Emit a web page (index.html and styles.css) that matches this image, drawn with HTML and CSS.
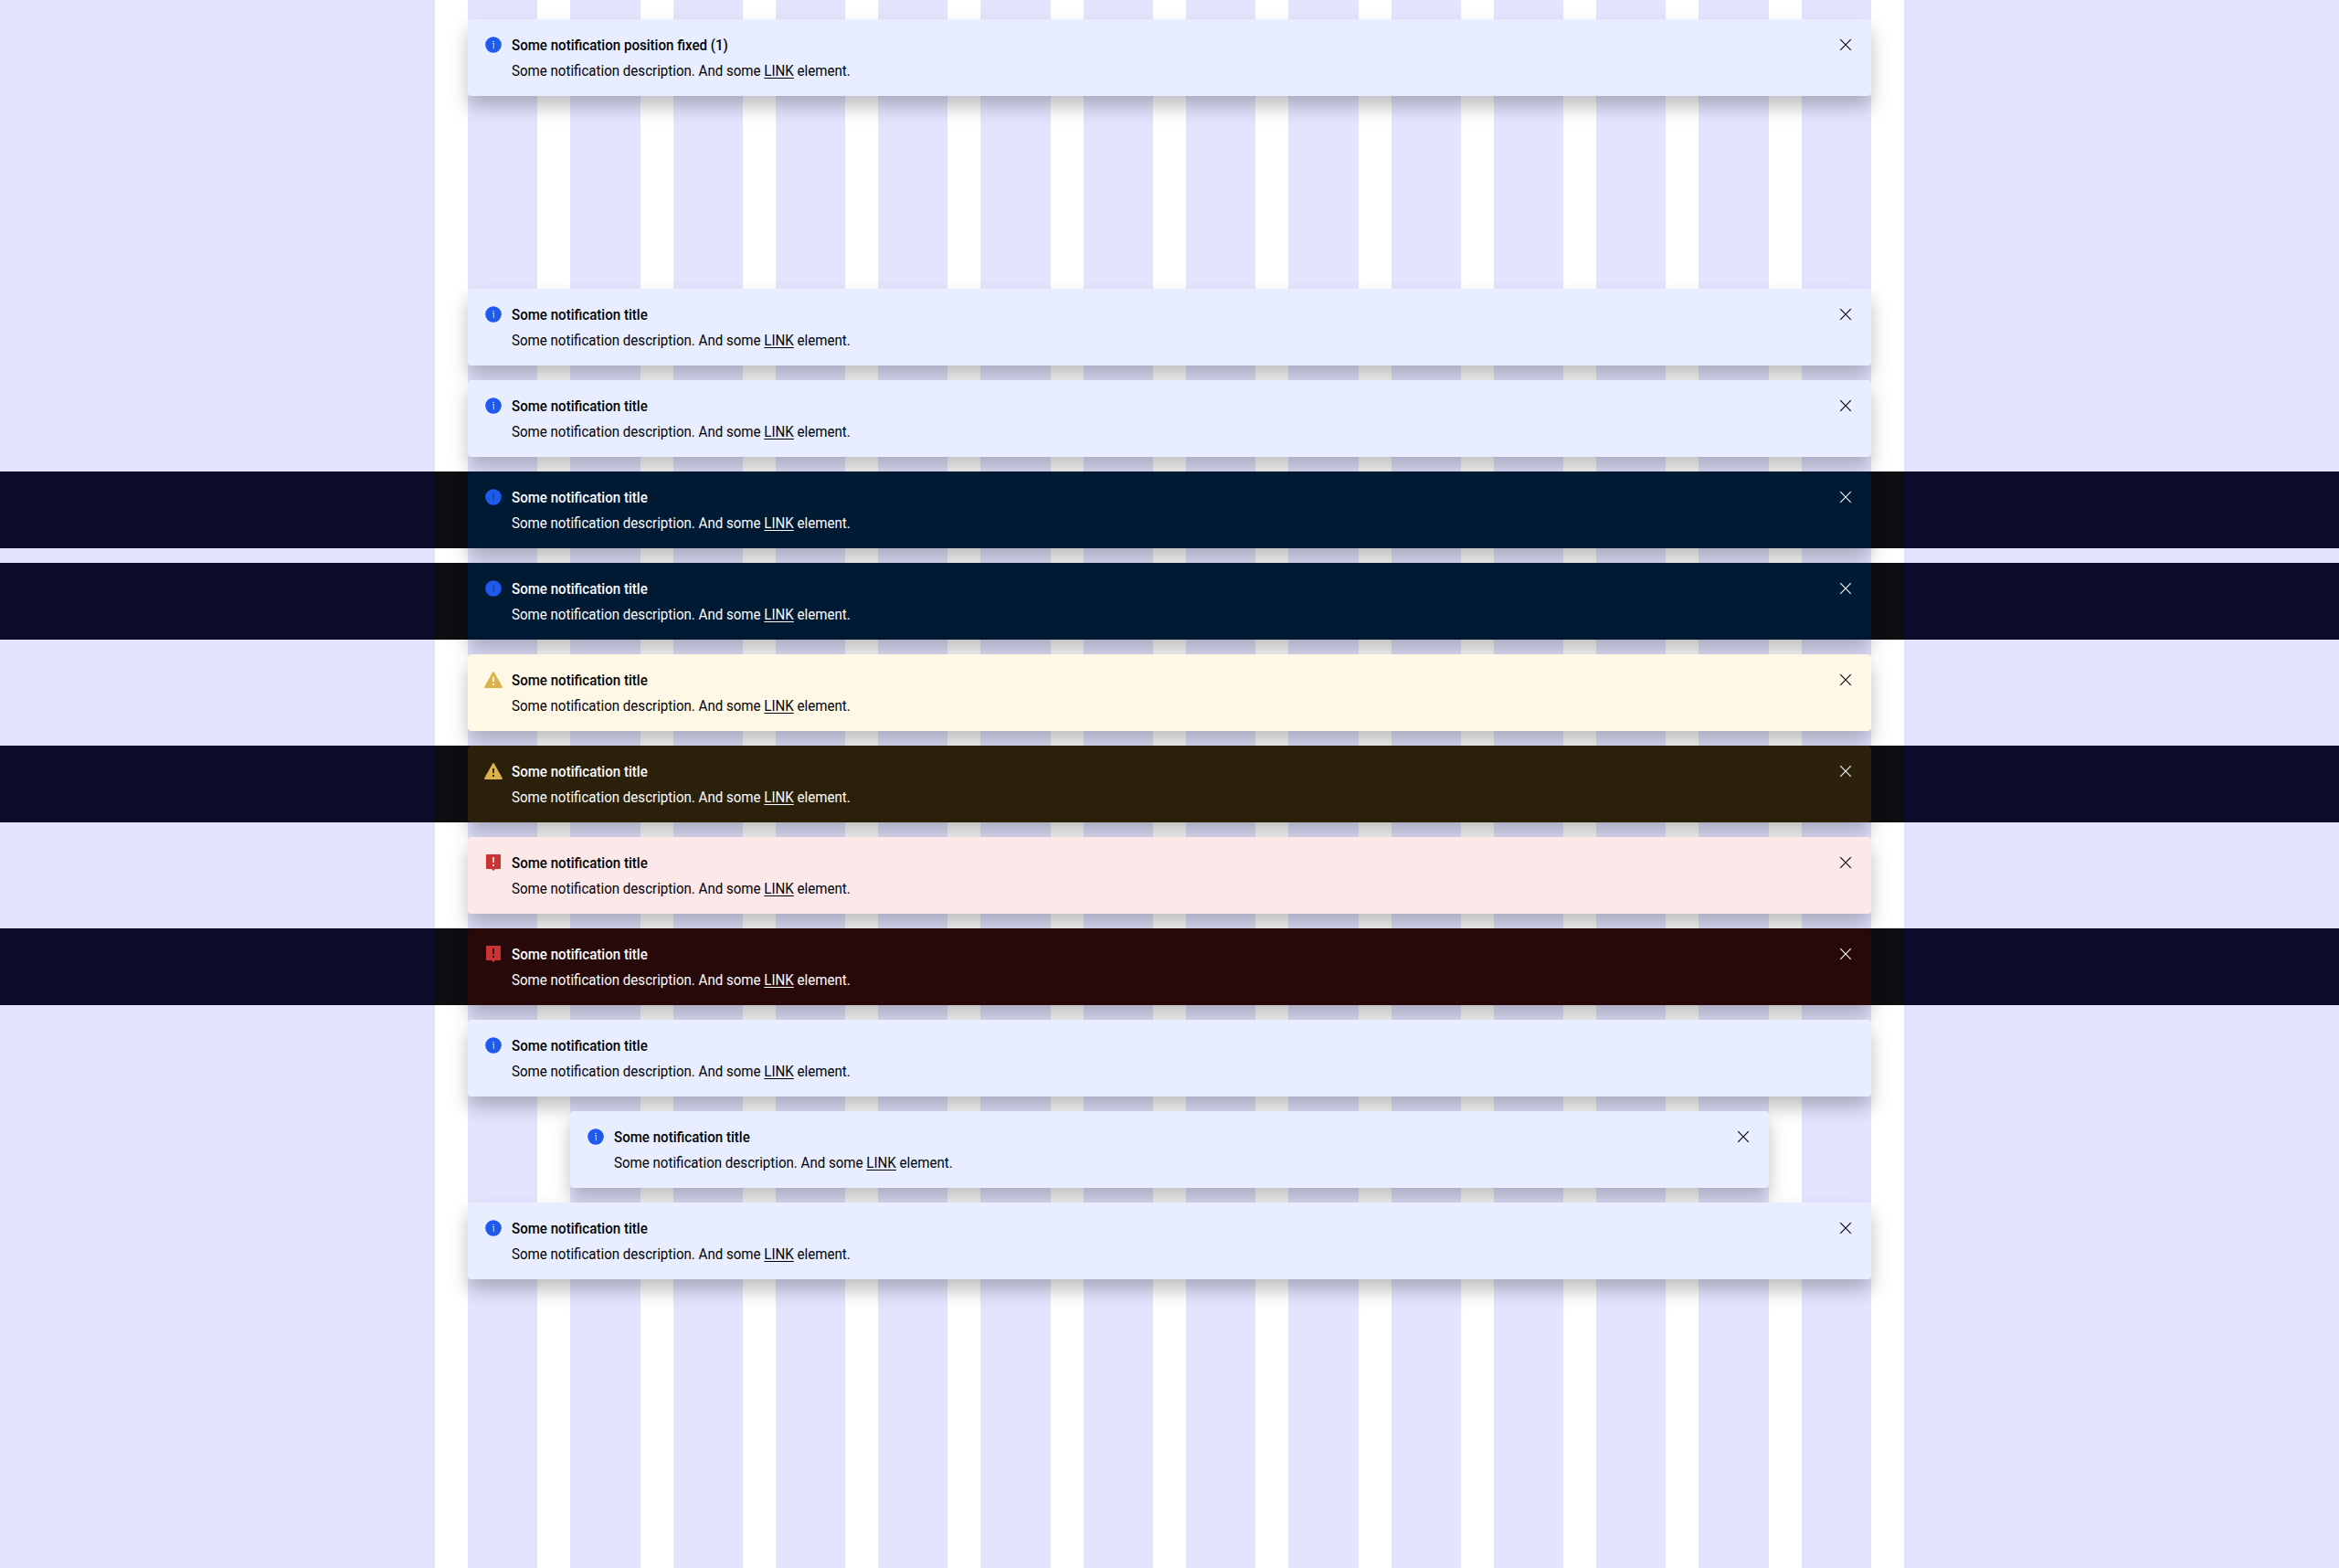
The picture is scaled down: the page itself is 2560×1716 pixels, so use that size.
FILE: index.html
```
<!DOCTYPE html>
<html lang="en">
<head>
<meta charset="utf-8">
<title>Banner</title>
<link rel="stylesheet" href="styles.css">
</head>
<body>
<svg class="sprite" aria-hidden="true">
  <symbol id="info" viewBox="0 0 24 24"><path d="M12 3.200a8.800 8.800 0 1 0 0 17.600a8.800 8.800 0 0 0 0-17.600z"/><path class="mark" d="M11 8h2v1.100h-2zM11 10h2v6.200h-1.200v-5.200h-.8z"/></symbol>
  <symbol id="warning" viewBox="0 0 24 24"><path d="M12 3q.5 0 .8.5l9.100 16.200q.3 1.300-.9 1.300H3q-1.200 0-.9-1.300L11.200 3.500Q11.500 3 12 3z"/><path class="mark" d="M11 9h2l-.2 5.200h-1.600zM11 16h2v2h-2z"/></symbol>
  <symbol id="error" viewBox="0 0 24 24"><path d="M5 3h14a1 1 0 0 1 1 1v14a1 1 0 0 1-1 1h-5l-2 2l-2-2H5a1 1 0 0 1-1-1V4a1 1 0 0 1 1-1z"/><path class="mark" d="M11 6h2l-.2 6.200h-1.600zM11 14h2v2h-2z"/></symbol>
  <symbol id="close" viewBox="0 0 24 24"><path d="M6.200 6.200l11.600 11.600M17.800 6.200L6.200 17.800"/></symbol>
</svg>
<div class="columns"><i></i><i></i><i></i><i></i><i></i><i></i><i></i><i></i><i></i><i></i><i></i><i></i><i></i><i></i><i></i><i></i></div>
<main class="page">
  <section class="row row-fixed"><div class="banner info"><svg class="icon"><use href="#info"/></svg><div class="content"><h5 class="title">Some notification position fixed (1)</h5><p class="text">Some notification description. And some <a href="#">LINK</a> element.</p></div><svg class="close"><use href="#close"/></svg></div></section>
  <section class="row"><div class="banner info"><svg class="icon"><use href="#info"/></svg><div class="content"><h5 class="title">Some notification title</h5><p class="text">Some notification description. And some <a href="#">LINK</a> element.</p></div><svg class="close"><use href="#close"/></svg></div></section>
  <section class="row"><div class="banner info"><svg class="icon"><use href="#info"/></svg><div class="content"><h5 class="title">Some notification title</h5><p class="text">Some notification description. And some <a href="#">LINK</a> element.</p></div><svg class="close"><use href="#close"/></svg></div></section>
  <section class="row dark"><div class="banner info"><svg class="icon"><use href="#info"/></svg><div class="content"><h5 class="title">Some notification title</h5><p class="text">Some notification description. And some <a href="#">LINK</a> element.</p></div><svg class="close"><use href="#close"/></svg></div></section>
  <section class="row dark"><div class="banner info"><svg class="icon"><use href="#info"/></svg><div class="content"><h5 class="title">Some notification title</h5><p class="text">Some notification description. And some <a href="#">LINK</a> element.</p></div><svg class="close"><use href="#close"/></svg></div></section>
  <section class="row"><div class="banner warning"><svg class="icon"><use href="#warning"/></svg><div class="content"><h5 class="title">Some notification title</h5><p class="text">Some notification description. And some <a href="#">LINK</a> element.</p></div><svg class="close"><use href="#close"/></svg></div></section>
  <section class="row dark"><div class="banner warning"><svg class="icon"><use href="#warning"/></svg><div class="content"><h5 class="title">Some notification title</h5><p class="text">Some notification description. And some <a href="#">LINK</a> element.</p></div><svg class="close"><use href="#close"/></svg></div></section>
  <section class="row"><div class="banner error"><svg class="icon"><use href="#error"/></svg><div class="content"><h5 class="title">Some notification title</h5><p class="text">Some notification description. And some <a href="#">LINK</a> element.</p></div><svg class="close"><use href="#close"/></svg></div></section>
  <section class="row dark"><div class="banner error"><svg class="icon"><use href="#error"/></svg><div class="content"><h5 class="title">Some notification title</h5><p class="text">Some notification description. And some <a href="#">LINK</a> element.</p></div><svg class="close"><use href="#close"/></svg></div></section>
  <section class="row"><div class="banner info"><svg class="icon"><use href="#info"/></svg><div class="content"><h5 class="title">Some notification title</h5><p class="text">Some notification description. And some <a href="#">LINK</a> element.</p></div></div></section>
  <section class="row row-narrow"><div class="banner info"><svg class="icon"><use href="#info"/></svg><div class="content"><h5 class="title">Some notification title</h5><p class="text">Some notification description. And some <a href="#">LINK</a> element.</p></div><svg class="close"><use href="#close"/></svg></div></section>
  <section class="row"><div class="banner info"><svg class="icon"><use href="#info"/></svg><div class="content"><h5 class="title">Some notification title</h5><p class="text">Some notification description. And some <a href="#">LINK</a> element.</p></div><svg class="close"><use href="#close"/></svg></div></section>
</main>
</body>
</html>
```
FILE: styles.css
```
* { box-sizing: border-box; }
body {
  margin: 0;
  background: #fff;
  font-family: Roboto, "Liberation Sans", sans-serif;
  font-size: 16px;
  line-height: 24px;
}
.sprite { position: absolute; width: 0; height: 0; }

/* grid overlay: painted over the row backgrounds, below the banners */
.columns {
  position: absolute;
  inset: 0;
  z-index: 1;
  display: grid;
  grid-template-columns: 476px repeat(14, 1fr) 476px;
  column-gap: 36px;
  min-height: 1716px;
}
.columns i { background: rgba(0, 0, 255, .105); }

.page {
  display: flex;
  flex-direction: column;
  gap: 16px;
  min-height: 1716px;
  padding-top: 21px;
}
.row { padding: 0 512px; }
.row-fixed { margin-bottom: 195px; }
.row-narrow { padding: 0 624px; }
.dark { background: #0e0e12; }

.banner {
  position: relative;
  z-index: 2;
  display: flex;
  gap: 8px;
  height: 84px;
  padding: 16px;
  border-radius: 4px;
  color: #010205;
  box-shadow: 0 12px 20px rgba(0, 0, 0, .25);
}
/* narrows the letterforms while keeping their height */
.content { flex: 1; padding-top: 1px; transform: scaleX(.943); transform-origin: 0 0; }
.title, .text { margin: 0; font-size: 16px; white-space: nowrap; }
.title { font-weight: 500; margin-bottom: 4px; }
.text { font-weight: 400; }
.text a { color: inherit; text-decoration: underline; text-underline-offset: 2px; text-decoration-thickness: 1px; }
.icon, .close { flex: none; width: 24px; height: 24px; }
.close { fill: none; stroke: #010205; stroke-width: 1.1; }

.info { background: #e8eeff; }
.warning { background: #fff8e6; }
.error { background: #fce8e8; }
.info .icon { fill: #1f5aee; --mark: #a9c2f8; }
.warning .icon { fill: #dcb34b; --mark: #fff8e6; }
.error .icon { fill: #cc3333; --mark: #fce8e8; }
.mark { fill: var(--mark); }

.dark .banner { color: #fbfcff; }
.dark .close { stroke: #fbfcff; }
.dark .info { background: #001a33; }
.dark .warning { background: #2b210a; }
.dark .error { background: #270909; }
.dark .info .icon { --mark: #14419a; }
.dark .warning .icon { --mark: #2b210a; }
.dark .error .icon { --mark: #270909; }
```
